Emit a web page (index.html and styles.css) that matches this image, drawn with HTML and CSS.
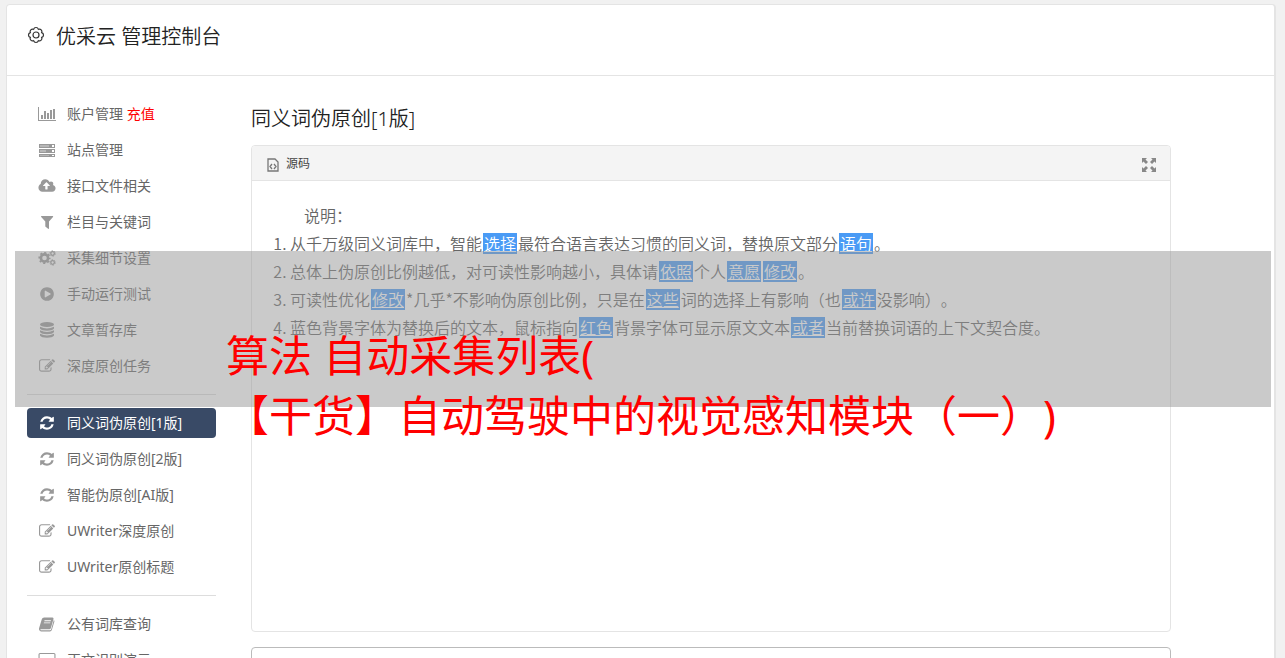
FILE: index.html
```html
<!DOCTYPE html>
<html lang="zh-CN">

<head>
    <meta charset="UTF-8">
    <meta name="viewport" content="width=device-width, initial-scale=1.0">
    <title>优采云 管理控制台</title>
    <link rel="stylesheet" href="styles.css">
</head>

<body>
    <svg class="symbols" aria-hidden="true">
        <symbol id="i-chart" viewBox="0 0 18 16">
            <path d="M0 1h1v13h17v1H0zM3 9h2v4H3zM6 5h2v8H6zM9 7h2v6H9zM12 4h2v9h-2zM15 3h2v10h-2z" />
        </symbol>
        <symbol id="i-server" viewBox="0 0 18 16">
            <path fill-rule="evenodd" d="M1 2h16v4H1zM2 3v2h9V3zM14 3v2h2V3zM1 7h16v4H1zM2 8v2h6V8zM14 8v2h2V8zM1 12h16v3H1zM2 13v1h9v-1zM14 13v1h2v-1z" />
            <path opacity=".7" d="M2 3h9v2H2zM2 8h6v2H2zM2 13h9v1H2z" />
        </symbol>
        <symbol id="i-cloud" viewBox="-64 0 1920 1792">
            <path d="M1216 864q0-14-9-23l-352-352q-9-9-23-9t-23 9l-351 351q-10 12-10 24 0 14 9 23t23 9h224v352q0 13 9.500 22.500t22.500 9.500h192q13 0 22.500-9.500t9.500-22.500v-352h224q13 0 22.500-9.500t9.500-22.500zm640 288q0 159-112.500 271.500t-271.500 112.500h-1088q-185 0-316.500-131.500t-131.500-316.500q0-130 70-240t188-165q-2-30-2-43 0-212 150-362t362-150q156 0 285.500 87t188.500 231q71-62 166-62 106 0 181 75t75 181q0 76-41 138 130 31 213.500 135.500t83.500 238.500z" />
        </symbol>
        <symbol id="i-filter" viewBox="0 0 18 16">
            <path d="M3.400 2h11.400q.8.300.2 1L11 7.500v7q-.2.700-.9.300L7.300 12.500V7.500L3.200 3q-.5-.7.2-1z" />
        </symbol>
        <symbol id="i-gears" viewBox="0 0 18 16">
            <g fill="none" stroke="currentColor">
                <circle cx="6.500" cy="8" r="3.600" stroke-width="2.600" />
                <circle cx="6.500" cy="8" r="5.300" stroke-width="1.600" stroke-dasharray="2.100 2.063" stroke-dashoffset="1" />
                <circle cx="14.600" cy="3.500" r="1.800" stroke-width="1.300" />
                <circle cx="14.600" cy="3.500" r="2.700" stroke-width="1" stroke-dasharray="1.400 1.427" />
                <circle cx="14.600" cy="12.500" r="1.800" stroke-width="1.300" />
                <circle cx="14.600" cy="12.500" r="2.700" stroke-width="1" stroke-dasharray="1.400 1.427" />
            </g>
        </symbol>
        <symbol id="i-play" viewBox="0 0 1792 1792">
            <path d="M896 128q209 0 385.500 103t279.500 279.500 103 385.500-103 385.500-279.500 279.500-385.500 103-385.500-103-279.500-279.500-103-385.500 103-385.500 279.500-279.500 385.500-103zm384 823q32-18 32-55t-32-55l-544-320q-31-19-64-1-32 19-32 56v640q0 37 32 56 16 8 32 8 17 0 32-9z" />
        </symbol>
        <symbol id="i-database" viewBox="0 0 16 16">
            <ellipse cx="8" cy="2.500" rx="7" ry="2.500" />
            <path d="M1 4.700q7 3.600 14 0v1.700q-1.500 2.200-7 2.300-5.500-.1-7-2.300zM1 8.200q7 3.600 14 0v1.700q-1.500 2.200-7 2.300-5.500-.1-7-2.300zM1 11.700q7 3.600 14 0v1.700q-1.500 2.200-7 2.300-5.500-.1-7-2.300z" />
        </symbol>
        <symbol id="i-edit" viewBox="0 0 1792 1792">
            <path d="M888 1184l116-116-152-152-116 116v56h96v96h56zm440-720q-16-16-33 1l-350 350q-17 17-1 33t33-1l350-350q17-17 1-33zm80 594v190q0 119-84.500 203.500t-203.500 84.500h-832q-119 0-203.500-84.500t-84.500-203.500v-832q0-119 84.500-203.500t203.500-84.500h832q63 0 117 25 15 7 18 23 3 17-9 29l-49 49q-14 14-32 8-23-6-45-6h-832q-66 0-113 47t-47 113v832q0 66 47 113t113 47h832q66 0 113-47t47-113v-126q0-13 9-22l64-64q15-15 35-7t20 29zm-96-738l288 288-672 672h-288v-288zm444 132l-92 92-288-288 92-92q28-28 68-28t68 28l152 152q28 28 28 68t-28 68z" />
        </symbol>
        <symbol id="i-refresh" viewBox="0 0 1792 1792">
            <path d="M1639 1056q0 5-1 7-64 268-268 434.500t-478 166.500q-146 0-282.500-55t-243.500-157l-129 129q-19 19-45 19t-45-19-19-45v-448q0-26 19-45t45-19h448q26 0 45 19t19 45-19 45l-137 137q71 66 161 102t187 36q134 0 250-65t186-179q11-17 53-117 8-23 30-23h192q13 0 22.500 9.500t9.500 22.500zm25-800v448q0 26-19 45t-45 19h-448q-26 0-45-19t-19-45 19-45l138-138q-148-137-349-137-134 0-250 65t-186 179q-11 17-53 117-8 23-30 23h-199q-13 0-22.500-9.500t-9.500-22.500v-7q65-268 270-434.500t480-166.500q146 0 284 55.500t245 156.500l130-129q19-19 45-19t45 19 19 45z" />
        </symbol>
        <symbol id="i-book" viewBox="0 0 18 16">
            <path fill-rule="evenodd" d="M6.200 1.500h8.300q1.300.1 1 1.500l-2.600 9q-.4 1.200-1.600 1.200H3q-.8 0-.7.500.2.600 1 .6h8.700q.8 0 1.200-1L15.800 4q.9.500.6 1.500l-2.500 8.300q-.5 1.500-2 1.700H3.300q-1.700-.2-2.200-1.700-.3-1 .1-2L3.700 3.500q.5-1.900 2.500-2zM6.600 4.300l-.3.900h6.400l.3-.9zM6 6.400l-.3.900h6.400l.3-.9z" />
        </symbol>
        <symbol id="i-laptop" viewBox="0 0 18 16">
            <path fill-rule="evenodd" d="M2 1h14q1.500 0 1.500 1.500V11q0 1.500-1.500 1.500h-5V14h2v1H5v-1h2v-1.500H2Q.5 12.500.5 11V2.500Q.5 1 2 1zm0 1q-.4 0-.4.500V10h14.800V2.500q0-.5-.4-.5z" />
        </symbol>
    </svg>

    <div class="container">
        <header class="header">
            <svg class="gear" viewBox="0 0 18 18">
                <path d="M14.700 6.600A2.500 2.500 0 0 1 14.700 11.400A2.500 2.500 0 0 1 11.400 14.700A2.500 2.500 0 0 1 6.600 14.700A2.500 2.500 0 0 1 3.300 11.400A2.500 2.500 0 0 1 3.300 6.600A2.500 2.500 0 0 1 6.600 3.300A2.500 2.500 0 0 1 11.400 3.300A2.500 2.500 0 0 1 14.700 6.600z" />
                <circle cx="9" cy="9" r="3" />
            </svg>
            <h1>优采云 管理控制台</h1>
        </header>

        <div class="content">
            <nav class="sidebar">
                <ul>
                    <li><a href="#"><svg><use href="#i-chart" /></svg><span>账户管理 <em>充值</em></span></a></li>
                    <li><a href="#"><svg><use href="#i-server" /></svg>站点管理</a></li>
                    <li><a href="#"><svg><use href="#i-cloud" /></svg>接口文件相关</a></li>
                    <li><a href="#"><svg><use href="#i-filter" /></svg>栏目与关键词</a></li>
                    <li><a href="#"><svg><use href="#i-gears" /></svg>采集细节设置</a></li>
                    <li><a href="#"><svg><use href="#i-play" /></svg>手动运行测试</a></li>
                    <li><a href="#"><svg><use href="#i-database" /></svg>文章暂存库</a></li>
                    <li><a href="#"><svg><use href="#i-edit" /></svg>深度原创任务</a></li>
                </ul>
                <ul>
                    <li class="active"><a href="#"><svg><use href="#i-refresh" /></svg>同义词伪原创[1版]</a></li>
                    <li><a href="#"><svg><use href="#i-refresh" /></svg>同义词伪原创[2版]</a></li>
                    <li><a href="#"><svg><use href="#i-refresh" /></svg>智能伪原创[AI版]</a></li>
                    <li><a href="#"><svg><use href="#i-edit" /></svg>UWriter深度原创</a></li>
                    <li><a href="#"><svg><use href="#i-edit" /></svg>UWriter原创标题</a></li>
                </ul>
                <ul>
                    <li><a href="#"><svg><use href="#i-book" /></svg>公有词库查询</a></li>
                    <li><a href="#"><svg><use href="#i-laptop" /></svg>正文识别演示</a></li>
                </ul>
            </nav>

            <main class="main">
                <h2>同义词伪原创[1版]</h2>
                <section class="editor">
                    <div class="toolbar">
                        <button type="button" class="source">
                            <svg viewBox="0 0 12 14">
                                <path d="M1 1h7l3 3v9H1zM5 6L3 8.500 5 11M7 6l2 2.500L7 11" />
                            </svg>
                            源码
                        </button>
                        <button type="button" class="full" aria-label="全屏">
                            <svg viewBox="0 0 14 14">
                                <path d="M0 0h5L3.500 1.500 6 4 4 6 1.500 3.500 0 5zM14 0v5l-1.500-1.500L10 6 8 4l2.500-2.500L9 0zM0 14V9l1.500 1.500L4 8l2 2-2.500 2.500L5 14zM14 14H9l1.500-1.500L8 10l2-2 2.500 2.500L14 9z" />
                            </svg>
                        </button>
                    </div>
                    <div class="text">
                        <p>说明：</p>
                        <ol>
                            <li>从千万级同义词库中，智能<a href="#">选择</a>最符合语言表达习惯的同义词，替换原文部分<a href="#">语句</a>。</li>
                            <li>总体上伪原创比例越低，对可读性影响越小，具体请<a href="#">依照</a>个人<a href="#">意愿</a><a href="#">修改</a>。</li>
                            <li>可读性优化<a href="#">修改</a>*几乎*不影响伪原创比例，只是在<a href="#">这些</a>词的选择上有影响（也<a href="#">或许</a>没影响）。</li>
                            <li>蓝色背景字体为替换后的文本，鼠标指向<a href="#">红色</a>背景字体可显示原文文本<a href="#">或者</a>当前替换词语的上下文契合度。</li>
                        </ol>
                    </div>
                </section>
                <textarea class="result" aria-label="原文"></textarea>
            </main>
        </div>
    </div>

    <div class="banner">
        <p>算法 自动采集列表(<br>【干货】自动驾驶中的视觉感知模块（一）)</p>
    </div>
</body>

</html>
```
FILE: styles.css
```css
* {
    box-sizing: border-box;
}

body {
    margin: 0;
    height: 100vh;
    overflow: hidden;
    position: relative;
    background: #f1f1f1;
    color: #666;
    font: 14px/30px "Noto Sans", "Noto Sans CJK SC", sans-serif;
    text-spacing-trim: space-all;
}

h1,
h2,
p,
ul,
ol {
    margin: 0;
    padding: 0;
}

h1,
h2 {
    color: #222;
    font-size: 20px;
    font-weight: 350;
    line-height: 32px;
}

a {
    color: inherit;
    text-decoration: none;
}

.symbols {
    display: none;
}

.container {
    margin: 4px 9px 0 6px;
    min-height: 100vh;
    background: #fff;
    border: 1px solid #e4e4e4;
    border-right-width: 2px;
    border-radius: 4px;
}

.header {
    display: flex;
    gap: 11px;
    padding: 16px 20px 22px;
    border-bottom: 1px solid #e4e4e4;
}

.gear {
    width: 18px;
    height: 18px;
    margin-top: 5px;
    fill: none;
    stroke: #333;
    stroke-width: 1.2;
}

.content {
    display: flex;
    gap: 35px;
    padding: 23px 20px;
}

/* 左侧菜单 */
.sidebar {
    flex: 0 0 189px;
}

.sidebar ul {
    display: flex;
    flex-direction: column;
    gap: 6px;
    list-style: none;
}

.sidebar ul + ul {
    margin-top: 13px;
    padding-top: 13px;
    border-top: 1px solid #ddd;
}

.sidebar a {
    display: flex;
    align-items: center;
    gap: 11px;
    height: 30px;
    padding-left: 11px;
    border-radius: 4px;
}

.sidebar svg {
    width: 18px;
    height: 16px;
    color: #999;
    fill: currentColor;
}

.sidebar em {
    color: #f00;
    font-style: normal;
}

.sidebar .active a {
    background: #394a66;
    color: #fff;
}

.sidebar .active svg {
    color: #fff;
}

/* 编辑器 */
.main {
    flex: 1;
    max-width: 920px;
    padding-top: 4px;
}

.editor {
    min-height: 487px;
    margin: 10px 0 15px;
    border: 1px solid #e4e4e4;
    border-radius: 4px;
}

.toolbar {
    display: flex;
    justify-content: space-between;
    height: 35px;
    padding: 0 14px 0 15px;
    background: #f4f4f4;
    border-bottom: 1px solid #e4e4e4;
    border-radius: 3px 3px 0 0;
}

.toolbar button {
    display: flex;
    align-items: center;
    gap: 7px;
    padding: 2px 0 0;
    border: 0;
    background: none;
    color: #444;
    font: 12px/20px "Noto Sans", "Noto Sans CJK SC", sans-serif;
}

.source svg {
    width: 12px;
    height: 14px;
    margin-top: 2px;
    fill: none;
    stroke: #777;
    stroke-width: 1.3;
}

.full svg {
    width: 14px;
    height: 14px;
    margin-top: 2px;
    fill: #888;
}

.text {
    padding: 20px;
    font-family: "Noto Sans CJK SC", sans-serif;
    font-size: 16px;
    font-weight: 350;
    line-height: 28px;
}

.text p {
    text-indent: 2em;
}

.text ol {
    padding-left: 18px;
}

.text a {
    margin: 0 1px;
    padding: 0 1px;
    background: linear-gradient(#4a9bf5, #4a9bf5) center / 100% 21px no-repeat;
    color: #fff;
    text-decoration: underline;
}

.result {
    display: block;
    width: 100%;
    height: 200px;
    border: 1px solid #bbb;
    border-radius: 4px;
}

/* 标题浮层 */
.banner {
    position: absolute;
    top: 251px;
    left: 15px;
    right: 14px;
    height: 156px;
    padding: 75px 0 0 211px;
    background: rgba(150, 150, 150, .5);
}

.banner p {
    color: #f00;
    font-size: 43px;
    line-height: 60px;
    white-space: nowrap;
}
```
